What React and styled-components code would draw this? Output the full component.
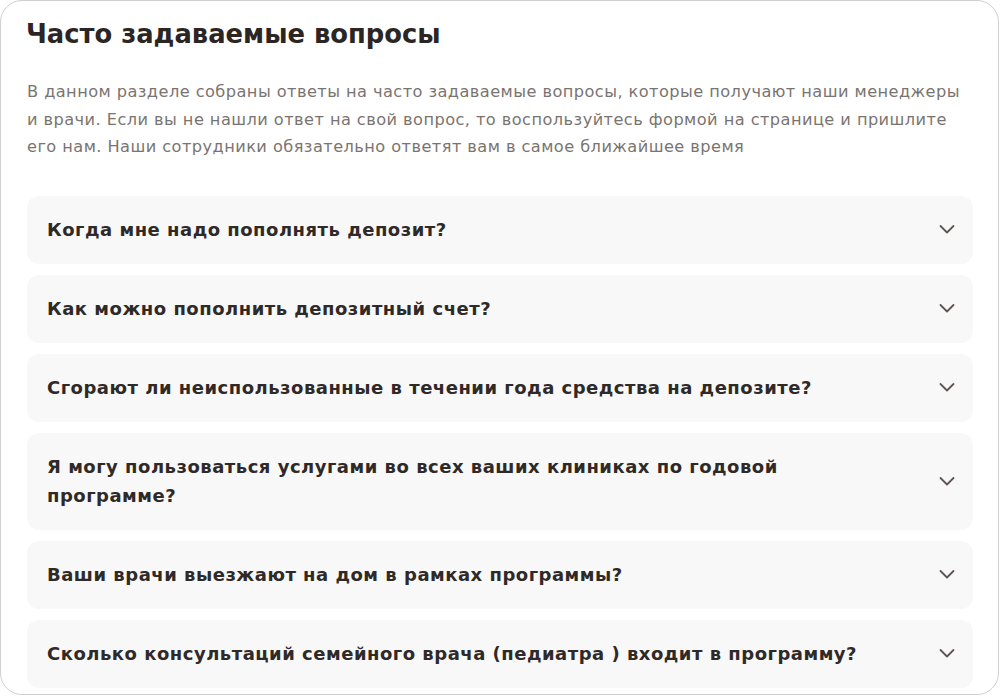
import React from "react";
import styled, {createGlobalStyle} from "styled-components";

const GlobalStyle = createGlobalStyle`
  html, body {
    margin: 0;
    padding: 0;
    background: #ffffff;
  }
  body {
    font-family: "DejaVu Sans", Inter, sans-serif;
  }
`;

const Frame = styled.section`
  box-sizing: border-box;
  width: 999px;
  height: 695px;
  border: 1px solid #cfcfcf;
  border-radius: 22px;
  padding: 16px 25px 0 26px;
  overflow: hidden;
  background: #fff;
`;

const Title = styled.h2`
  margin: 0 0 0 -1px;
  font-size: 25.8px;
  line-height: 34px;
  font-weight: 700;
  color: #2b2624;
`;

const Intro = styled.p`
  margin: 27px 0 0 0;
  font-size: 16.2px;
  line-height: 27.5px;
  letter-spacing: 0.44px;
  white-space: nowrap;
  color: #7a7470;
`;

const List = styled.div`
  display: flex;
  flex-direction: column;
  gap: 11px;
  margin-top: 35px;
`;

const Item = styled.div`
  display: flex;
  align-items: center;
  justify-content: space-between;
  box-sizing: border-box;
  padding: 19px 14px 20px 20px;
  background: #f8f8f8;
  border-radius: 12px;
`;

const Question = styled.div`
  font-size: 18px;
  line-height: 29px;
  font-weight: 700;
  letter-spacing: 0.5px;
  color: #2f2a27;
  max-width: 835px;
`;

const Chevron = styled.svg`
  flex: none;
  width: 24px;
  height: 24px;
  color: #5c5552;
`;

function ChevronDown() {
    return (
        <Chevron viewBox="0 0 24 24" fill="none">
            <path d="M5.5 9l6.5 6.5L18.5 9" stroke="currentColor" strokeWidth="1.8"
                  strokeLinecap="round" strokeLinejoin="round"/>
        </Chevron>
    )
}

const questions = [
    "Когда мне надо пополнять депозит?",
    "Как можно пополнить депозитный счет?",
    "Сгорают ли неиспользованные в течении года средства на депозите?",
    "Я могу пользоваться услугами во всех ваших клиниках по годовой программе?",
    "Ваши врачи выезжают на дом в рамках программы?",
    "Сколько консультаций семейного врача (педиатра ) входит в программу?",
];

export default function App() {
    return (
        <>
            <GlobalStyle/>
            <Frame>
                <Title>Часто задаваемые вопросы</Title>
                <Intro>
                    В данном разделе собраны ответы на часто задаваемые вопросы, которые получают наши менеджеры<br/>
                    и врачи. Если вы не нашли ответ на свой вопрос, то воспользуйтесь формой на странице и пришлите<br/>
                    его нам. Наши сотрудники обязательно ответят вам в самое ближайшее время
                </Intro>
                <List>
                    {questions.map(q => (
                        <Item key={q}>
                            <Question>{q}</Question>
                            <ChevronDown/>
                        </Item>
                    ))}
                </List>
            </Frame>
        </>
    )
}
